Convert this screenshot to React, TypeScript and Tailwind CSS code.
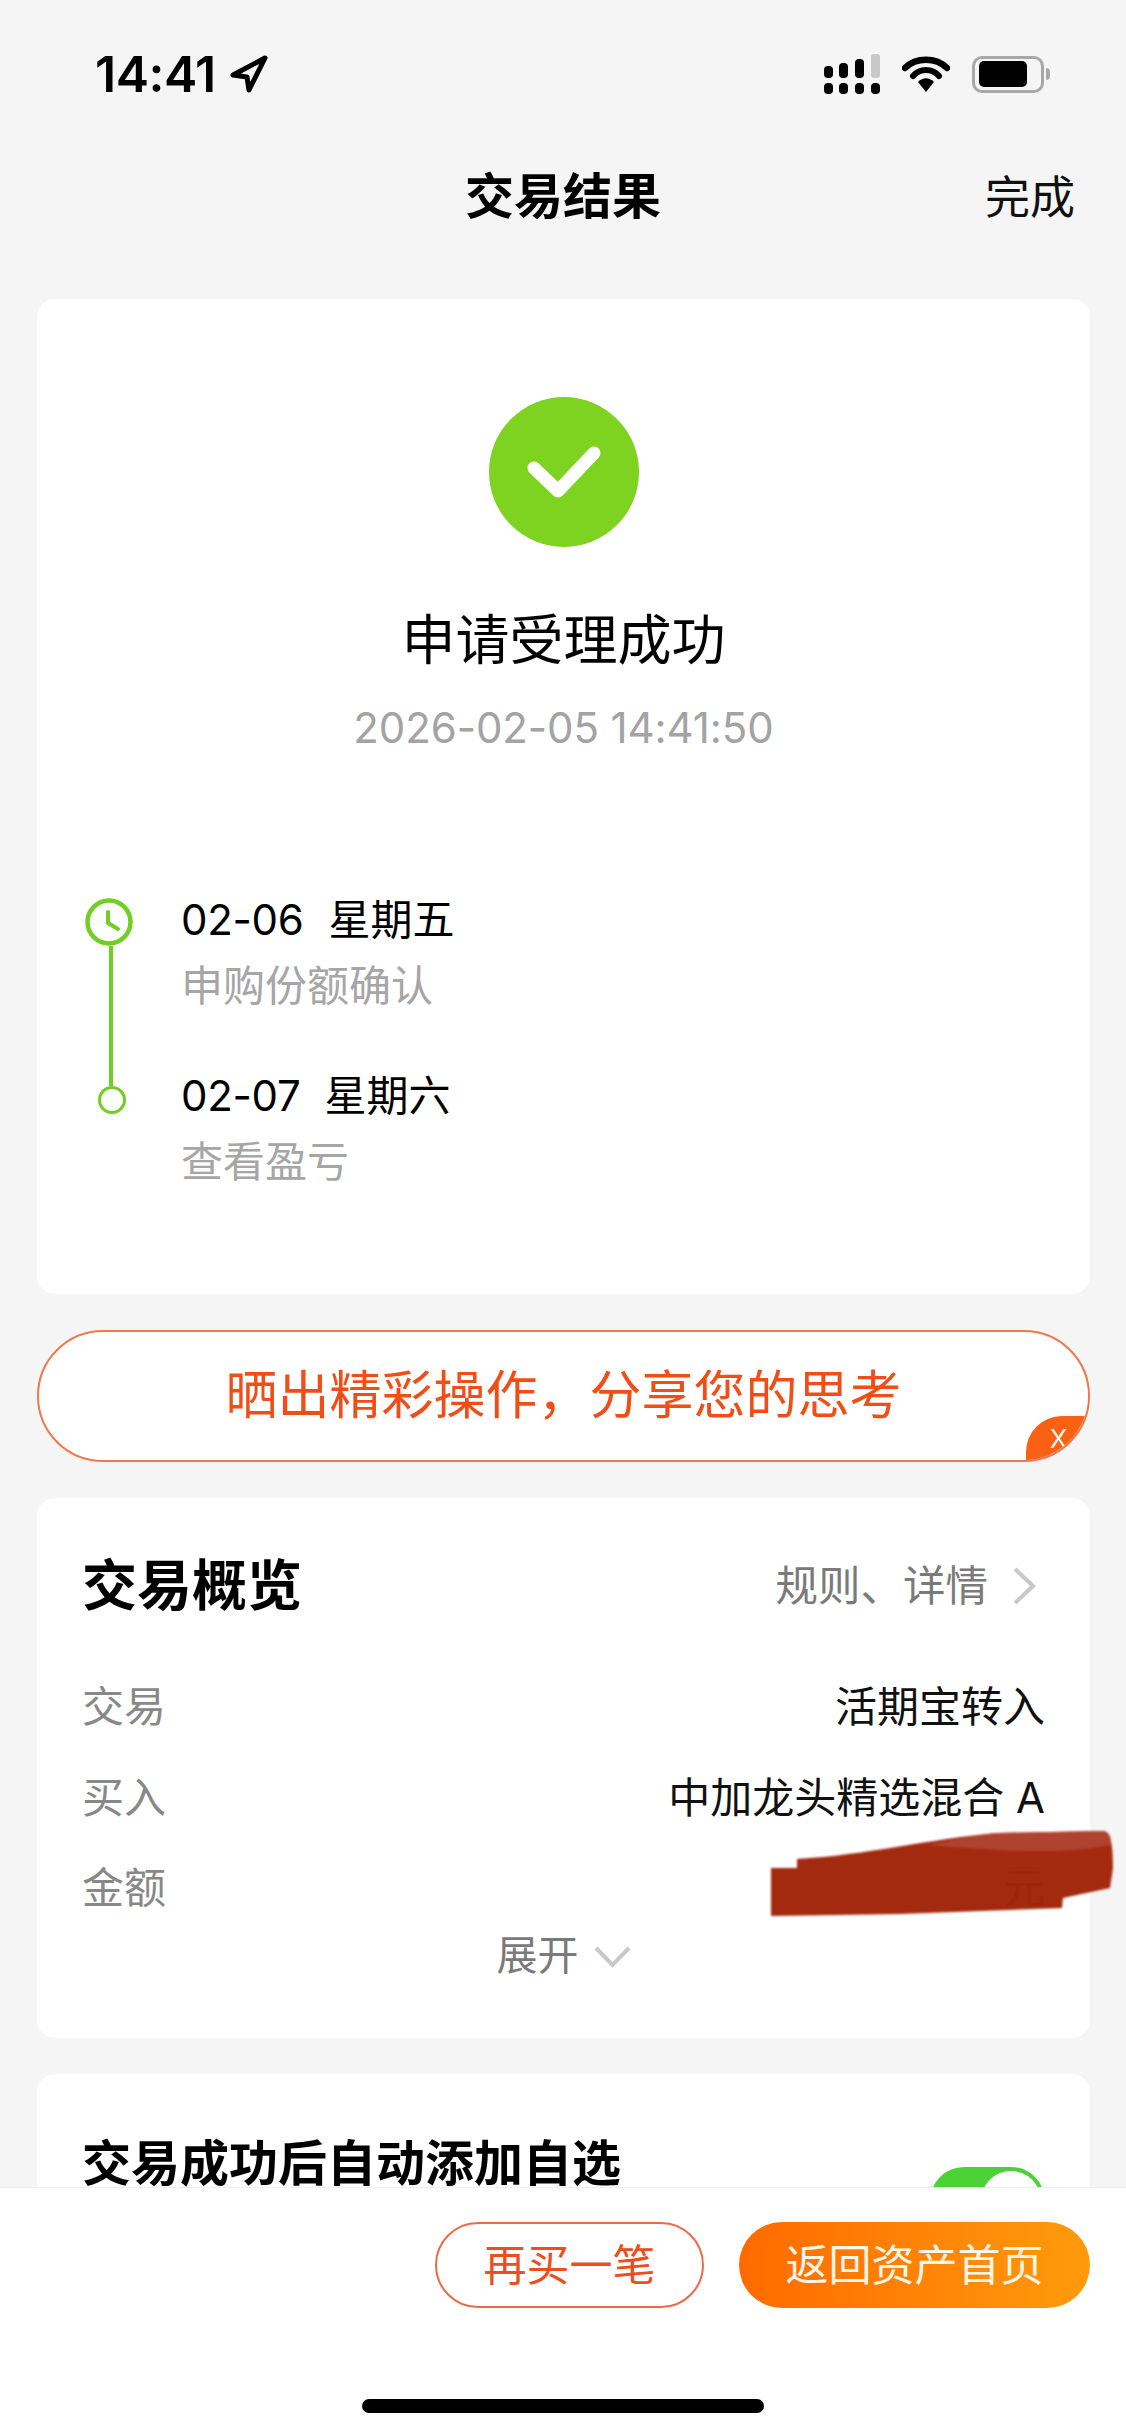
// 状态栏
function StatusBar() {
  return (
    <div className="flex h-[112px] items-end justify-between pb-[18px] pl-[95px] pr-[76px]">
      <div className="flex items-center gap-[14px]">
        <span className="text-[50px] font-semibold leading-[40px] tracking-[-0.5px] text-black">14:41</span>
        <svg width="38" height="38" viewBox="0 0 38 38" fill="none">
          <path d="M35 3 L3 20 L17 22 L19 35 Z" stroke="#000" strokeWidth="5" strokeLinejoin="round" />
        </svg>
      </div>
      <div className="flex items-center gap-[22px]">
        <svg width="56" height="40" viewBox="0 0 56 40">
          <rect x="0" y="12" width="9" height="12" rx="4" fill="#000" />
          <rect x="15" y="9" width="9" height="15" rx="4" fill="#000" />
          <rect x="31" y="5" width="9" height="19" rx="4" fill="#000" />
          <rect x="47" y="0" width="9" height="24" rx="3" fill="#c8c8c8" />
          <rect x="0" y="29" width="9" height="11" rx="4" fill="#000" />
          <rect x="15" y="29" width="9" height="11" rx="4" fill="#000" />
          <rect x="31" y="29" width="9" height="11" rx="4" fill="#000" />
          <rect x="47" y="29" width="9" height="11" rx="4" fill="#000" />
        </svg>
        <svg width="48" height="36" viewBox="0 0 48 36" fill="none">
          <path d="M3 12 C14 1 34 1 45 12" stroke="#000" strokeWidth="6.5" strokeLinecap="round" />
          <path d="M11 20 C18 12 30 12 37 20" stroke="#000" strokeWidth="6" strokeLinecap="round" />
          <path d="M16 26 L24 36 L32 26 C27 21 21 21 16 26 Z" fill="#000" />
        </svg>
        <div className="flex items-center gap-[2px]">
          <div className="flex h-[37px] w-[72px] items-center rounded-[10px] border-[3px] border-[#a8a8a8] pl-[4px]">
            <div className="h-[26px] w-[48px] rounded-[5px] bg-black" />
          </div>
          <div className="h-[12px] w-[4px] rounded-r-full bg-[#a8a8a8]" />
        </div>
      </div>
    </div>
  );
}

// 时间轴文字
function TimelineText({ date, week, note, gap }: { date: string; week: string; note: string; gap: string }) {
  return (
    <div>
      <p className="flex h-[44px] items-center text-[42px] leading-[44px] text-black">
        <span className="tracking-[-0.3px]">{date}</span>
        <span className={gap}>{week}</span>
      </p>
      <p className="mt-[23px] h-[42px] text-[42px] leading-[42px] text-[#a6a6a6]">{note}</p>
    </div>
  );
}

function InfoRow({ label, value }: { label: string; value: string }) {
  return (
    <div className="flex h-[90.5px] items-center justify-between text-[42px] leading-[50px]">
      <span className="text-[#888888]">{label}</span>
      <span className="text-[#111111]">{value}</span>
    </div>
  );
}

export default function App() {
  return (
    <div className="relative h-[2436px] w-[1126px] overflow-hidden bg-[#f5f5f5] font-[Inter,'Noto_Sans_CJK_SC',sans-serif]">
      <StatusBar />

      {/* 导航 */}
      <div className="relative flex h-[187px] justify-center pt-[59px]">
        <h1 className="text-[49px] font-semibold leading-[52px] text-black">交易结果</h1>
        <span className="absolute right-[51px] top-[60px] text-[45px] leading-[52px] text-[#111111]">完成</span>
      </div>

      {/* 结果卡片 */}
      <div className="ml-[37px] mr-[36px] h-[995px] rounded-[18px] bg-white pt-[98px]">
        <div className="flex flex-col items-center">
          <div className="flex h-[150px] w-[150px] items-center justify-center rounded-full bg-[#7ed321]">
            <svg width="74" height="52" viewBox="0 0 74 52" fill="none">
              <path d="M7 22 L31 45 L67 7" stroke="#fff" strokeWidth="13" strokeLinecap="round" strokeLinejoin="round" />
            </svg>
          </div>
          <h2 className="mt-[62px] text-[54px] leading-[64px] text-black">申请受理成功</h2>
          <p className="mt-[31px] text-[42px] leading-[48px] tracking-[-0.1px] text-[#a3a3a3]">2026-02-05 14:41:50</p>
        </div>

        <div className="mt-[146px] flex pl-[48px]">
          <div className="flex w-[48px] flex-col items-center">
            <svg width="48" height="48" viewBox="0 0 48 48" fill="none">
              <circle cx="24" cy="24" r="21.5" stroke="#6fcf24" strokeWidth="4.5" />
              <path d="M23 14 V25 L33 31" stroke="#6fcf24" strokeWidth="4" strokeLinecap="round" strokeLinejoin="round" />
            </svg>
            <div className="ml-[4px] h-[140px] w-[4px] bg-[#6fcf24]" />
            <div className="ml-[6px] h-[28px] w-[28px] rounded-full border-[3px] border-[#6fcf24]" />
          </div>
          <div className="ml-[48px] flex flex-col gap-[67px]">
            <TimelineText date="02-06" week="星期五" note="申购份额确认" gap="ml-[25px]" />
            <TimelineText date="02-07" week="星期六" note="查看盈亏" gap="ml-[24px]" />
          </div>
        </div>
      </div>

      {/* 分享横幅 */}
      <div className="relative ml-[37px] mr-[36px] mt-[36px] flex h-[132px] items-center justify-center overflow-hidden rounded-[66px] border-2 border-[#f0774a] bg-white">
        <span className="text-[52px] leading-[60px] text-[#f04e16]">晒出精彩操作，分享您的思考</span>
        <div className="absolute bottom-0 right-0 flex h-[44px] w-[62px] items-center justify-center rounded-tl-[36px] bg-[#fb6114] pb-[4px] pl-[3px] text-[34px] font-light leading-[34px] text-white">
          x
        </div>
      </div>

      {/* 交易概览 */}
      <div className="relative ml-[37px] mr-[36px] mt-[36px] h-[540px] rounded-[18px] bg-white px-[45px] pt-[53px]">
        <div className="flex h-[68px] items-center justify-between">
          <h2 className="text-[55px] font-bold leading-[68px] text-black">交易概览</h2>
          <div className="mt-[2px] flex items-center">
            <span className="text-[42.5px] leading-[50px] text-[#7a7a7a]">规则、详情</span>
            <svg className="ml-[24px] mr-[9px]" width="24" height="40" viewBox="0 0 24 40" fill="none">
              <path d="M3 3 L21 20 L3 37" stroke="#c8c8c8" strokeWidth="4" />
            </svg>
          </div>
        </div>
        <div className="mt-[43px]">
          <InfoRow label="交易" value="活期宝转入" />
          <InfoRow label="买入" value="中加龙头精选混合 A" />
          <InfoRow label="金额" value="元" />
        </div>
        <div className="mt-[-4px] flex items-center justify-center text-[#7a7a7a]">
          <span className="text-[41px] leading-[50px]">展开</span>
          <svg className="ml-[15px] mt-[4px]" width="37" height="24" viewBox="0 0 37 24" fill="none">
            <path d="M2 3 L18.5 20 L35 3" stroke="#c8c8c8" strokeWidth="4" />
          </svg>
        </div>
        {/* 涂抹遮挡 */}
        <svg className="absolute left-[731px] top-[333px] blur-[1px]" width="348" height="88" viewBox="0 0 348 88">
          <path d="M3 37 L29 37 L29 28 C100 24 160 8 229 2 L334 0 C342 0 345 10 345 37 L342 57 L295 67 L294 77 L132 83 L3 85 Z" fill="#a1250a" opacity="0.98" />
          <path d="M160 14 C190 8 210 4 229 2 L334 0 C342 0 344 8 342 14 C300 24 230 20 160 14 Z" fill="#b0432f" />
        </svg>
      </div>

      {/* 自动添加自选 */}
      <div className="relative ml-[37px] mr-[36px] mt-[36px] h-[300px] rounded-[18px] bg-white px-[45px] pt-[57px]">
        <h2 className="text-[49px] font-semibold leading-[66px] text-black">交易成功后自动添加自选</h2>
        <div className="absolute right-[45px] top-[93px] h-[68px] w-[115px] rounded-full bg-[#4cd137]">
          <div className="absolute right-[4px] top-[4px] h-[60px] w-[60px] rounded-full bg-white" />
        </div>
      </div>

      {/* 底部操作栏 */}
      <div className="absolute bottom-0 left-0 right-0 flex h-[249px] flex-col border-t border-[#eeeeee] bg-white">
        <div className="mr-[36px] mt-[34px] flex justify-end gap-[35px]">
          <button className="flex h-[86px] w-[269px] items-center justify-center rounded-[43px] border-2 border-[#ec6a48] text-[43px] text-[#ec4e20]">
            再买一笔
          </button>
          <button className="flex h-[86px] w-[351px] items-center justify-center rounded-[43px] bg-gradient-to-r from-[#ff6a00] to-[#ff9a0c] text-[43px] text-[#fff6ea]">
            返回资产首页
          </button>
        </div>
        <div className="mx-auto mt-[91px] h-[14px] w-[402px] rounded-full bg-black" />
      </div>
    </div>
  );
}
